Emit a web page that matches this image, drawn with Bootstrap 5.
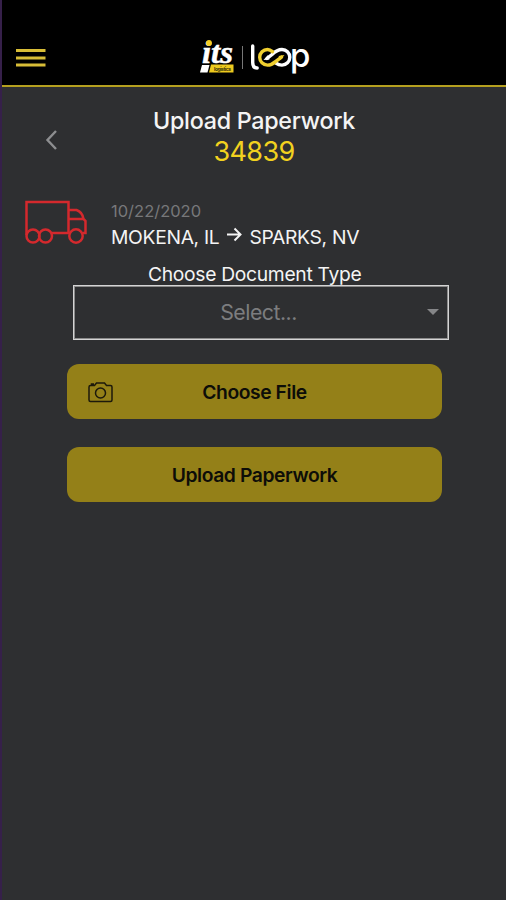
<!DOCTYPE html>
<html lang="en">
<head>
<meta charset="utf-8">
<meta name="viewport" content="width=device-width, initial-scale=1">
<title>Upload Paperwork</title>
<link href="https://cdn.jsdelivr.net/npm/bootstrap@5.3.0/dist/css/bootstrap.min.css" rel="stylesheet">
<style>
body{background:#2e2f31;color:#f4f4f4;font-family:Inter,"Liberation Sans",sans-serif;height:900px;overflow:hidden;border-left:2px solid #36204a}
svg{display:block}
.topbar{height:87px;background:#000;border-bottom:2px solid #b5a01f}
.menu-btn{margin:46px 0 0 14px}
.brand-logo{margin:24px 0 0 150px}
.title-row{height:89px;padding-top:18px}
.back-btn{margin:24px 0 0 42px}
.heading{width:212px;margin-left:89px}
.page-title{font-size:23.3px;line-height:31px;font-weight:500;letter-spacing:-.27px}
.load-no{font-size:27px;line-height:32px;color:#f2d21f;letter-spacing:-.6px}
.trip{padding:22px 0 0 22px;height:83px}
.trip-text{margin-left:22px;padding-top:1px}
.trip-date{font-size:16.5px;line-height:24px;color:#77787a}
.trip-route{font-size:19.3px;line-height:28px;letter-spacing:-.32px}
.route-arrow{margin:0 7px 0 8px}
.doc-label{font-size:19.3px;line-height:26px;padding-top:2px;height:26px;margin-left:146px;letter-spacing:-.32px}
.doc-select{width:376px;height:55px;margin:0 0 0 71px;border:1.500px solid #d4d4d4;outline:1px solid #8a8a8a;outline-offset:-2px;border-radius:0;background:none;color:#7c7d7f;font-size:21.3px;padding:1px 9px 0 8px;letter-spacing:-.5px}
.action{width:375px;height:55px;margin-left:65px;border-radius:12px;background:#948018;color:#0d0d08;font-weight:600;font-size:19.3px;letter-spacing:-.42px}
.action span{display:block;padding-top:1px}
.action:hover{background:#a28d1c}
.action-pick{margin:24px 0 28px}
.camera{left:21px;top:18px}
</style>
</head>
<body>
<header class="topbar d-flex align-items-start">
  <button class="menu-btn btn p-0 border-0" aria-label="Menu"><svg width="30" height="24" fill="#d8bd37"><path d="M0 3h29.500v3H0zM0 10.500h29.500v3H0zM0 17.500h29.500v3H0z"/></svg></button>
  <svg class="brand-logo" width="120" height="60" viewBox="196 24 120 60" role="img" aria-label="its loop">
    <text x="202" y="62.500" font-family="Liberation Serif" font-size="32" font-weight="700" font-style="italic" fill="#fff" stroke="#fff" stroke-width=".5" textLength="31" lengthAdjust="spacingAndGlyphs">its</text>
    <circle cx="209" cy="43" r="2.900" fill="#f4ce24"/>
    <path d="M202 65h7.500l-2 7.500H200z" fill="#fff"/><path d="M211 64.500h22.500v8H209z" fill="#edc91e"/>
    <text x="214" y="70.500" font-family="Inter" font-size="5" font-weight="700" fill="#373009" textLength="17">logistics</text>
    <path d="M242.500 46v23" stroke="#777"/>
    <g fill="none" stroke="#fff" stroke-width="3.400" stroke-linecap="round">
      <path d="M252.700 46v16.500q0 5.500 4.500 5.500"/>
      <path d="M267 58.500l5-4q5-5 10-5a7.800 7.800 0 0 1 0 15.600q-3.500 0-6-2"/>
      <path d="M272.500 51.600q-2.500-2.100-5-2.100a7.800 7.800 0 0 0 0 15.600q4 0 8-3.500l6-4.500" stroke="#f0cf2f"/>
    </g>
    <path d="M263.500 60l4.500-5 1.500 4.500z" fill="#fff"/><path d="M284.500 55l-4 5-2-4z" fill="#f0cf2f"/>
    <text x="290" y="67.300" font-family="Inter" font-size="33" font-weight="500" fill="#fff">p</text>
  </svg>
</header>
<main>
  <div class="title-row d-flex align-items-start">
    <button class="back-btn btn p-0 border-0" aria-label="Back"><svg width="15" height="22" fill="none" stroke="#8d8e90" stroke-width="2.400"><path d="M12 2 3.500 11l8.500 9"/></svg></button>
    <div class="heading text-center text-nowrap"><div class="page-title">Upload Paperwork</div><div class="load-no">34839</div></div>
  </div>
  <section class="trip d-flex align-items-start">
    <svg width="65" height="47" viewBox="24 198 65 47" fill="none" stroke="#d4292d" stroke-width="2.500"><path d="M26.500 235v-33h42v31H51M69 210h7.500q6 2 7 9l2 2v12h-3M69 219h15M68.500 233h2"/><circle cx="33" cy="236" r="6.500"/><circle cx="45.500" cy="236" r="6.500"/><circle cx="76" cy="236" r="6.700"/></svg>
    <div class="trip-text text-nowrap">
      <div class="trip-date">10/22/2020</div>
      <div class="trip-route d-flex"><span>MOKENA, IL</span><svg class="route-arrow" width="15" height="22" fill="none" stroke="#f4f4f4" stroke-width="2"><path d="M0 11.500h13M7.500 5.500l6 6-6 6"/></svg><span>SPARKS, NV</span></div>
    </div>
  </section>
  <div class="doc-label text-nowrap">Choose Document Type</div>
  <button class="doc-select d-flex align-items-center"><span class="flex-grow-1 text-center ps-2">Select...</span><svg width="12" height="8"><path d="M0 0h12L6 6z" fill="#858688"/></svg></button>
  <div class="action-pick"><button class="action btn border-0 d-block position-relative p-0"><svg class="camera position-absolute" width="26" height="21" fill="none" stroke="#1c190b" stroke-width="1.500"><path d="M2.500 3.500h4l2-2.500h8l2 2.500h4q1.500 0 1.500 1.500v13q0 1.500-1.500 1.500h-20Q1 19.500 1 18V5q0-1.500 1.500-1.500zM3.500 3.500V2H6"/><circle cx="12.500" cy="11" r="5"/></svg><span>Choose File</span></button></div>
  <button class="action btn border-0 d-block p-0"><span>Upload Paperwork</span></button>
</main>
<script src="https://cdn.jsdelivr.net/npm/bootstrap@5.3.0/dist/js/bootstrap.bundle.min.js"></script>
</body>
</html>
